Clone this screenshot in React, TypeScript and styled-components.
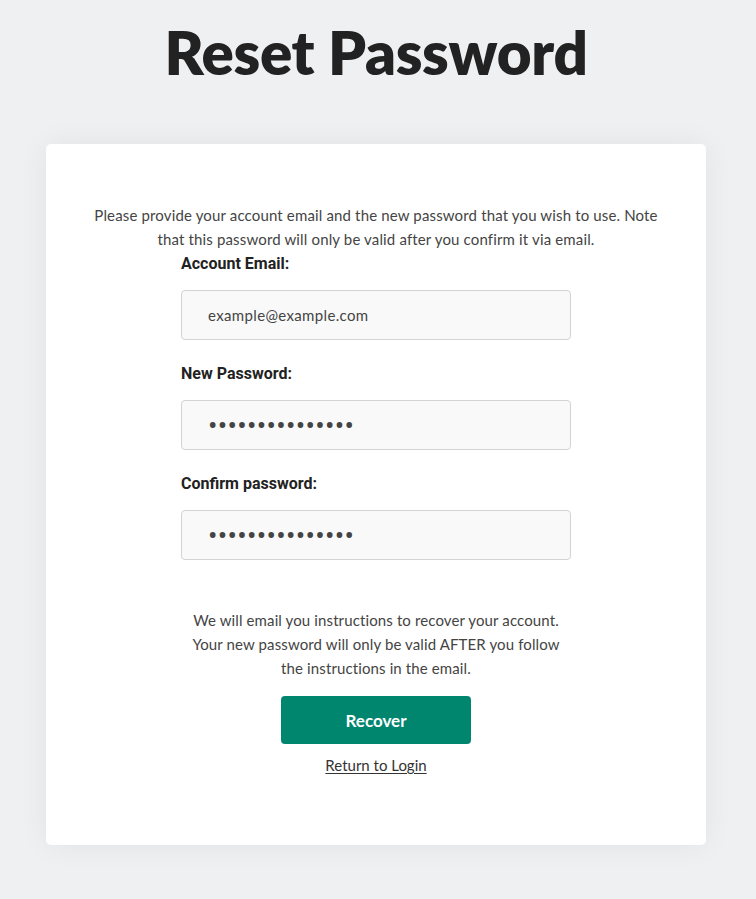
import React from "react";
import styled, { createGlobalStyle } from "styled-components";

const Global = createGlobalStyle`
  html, body { margin: 0; padding: 0; background: #eff0f2; }
  body { font-family: Lato, "Open Sans", sans-serif; color: #444; }
  * { box-sizing: border-box; }
`;

const Page = styled.div`
  width: 752px;
  display: flex;
  flex-direction: column;
  align-items: center;
  padding: 16px 0 55px;
`;

const Title = styled.h1`
  margin: 0;
  font-family: Lato, sans-serif;
  font-weight: 800;
  font-size: 60px;
  line-height: 72px;
  color: #222;
  letter-spacing: -0.3px;
`;

const Card = styled.div`
  margin-top: 56px;
  width: 660px;
  background: #fff;
  border-radius: 5px;
  box-shadow: 0 0 30px rgba(0, 0, 0, 0.06);
  padding: 59px 40px 68px;
  display: flex;
  flex-direction: column;
  align-items: center;
`;

const Intro = styled.p`
  margin: 0;
  font-size: 15px;
  line-height: 24px;
  letter-spacing: 0.15px;
  text-align: center;
  color: #444;
`;

const Form = styled.form`
  width: 390px;
  padding-top: 1px;
  display: flex;
  flex-direction: column;
`;

const Label = styled.label<{ $first?: boolean }>`
  font-family: Roboto, sans-serif;
  font-weight: 700;
  font-size: 16px;
  line-height: 24px;
  color: #222;
  margin-top: ${(p) => (p.$first ? "0" : "22px")};
  margin-bottom: 14px;
`;

const Input = styled.input<{ $secret?: boolean }>`
  width: 100%;
  height: 50px;
  border: 1px solid #d3d3d3;
  border-radius: 4px;
  background: #f9f9f9;
  padding: 0 26px;
  font-family: ${(p) => (p.$secret ? "Roboto, sans-serif" : "Lato, sans-serif")};
  font-size: ${(p) => (p.$secret ? "28px" : "15px")};
  letter-spacing: ${(p) => (p.$secret ? "0.3px" : "0.35px")};
  color: #444;
  outline: none;
`;

const Notice = styled.p`
  margin: 48px 0 0;
  width: 378px;
  font-size: 15px;
  line-height: 24px;
  letter-spacing: 0.12px;
  text-align: center;
  color: #444;
`;

const Button = styled.button`
  margin-top: 16px;
  width: 190px;
  height: 48px;
  border: none;
  border-radius: 4px;
  background: #00856f;
  color: #fff;
  font-family: Lato, sans-serif;
  font-weight: 700;
  font-size: 17px;
  cursor: pointer;
`;

const BackLink = styled.a`
  margin-top: 9px;
  font-size: 15px;
  line-height: 24px;
  color: #333;
  text-decoration: underline;
  text-underline-offset: 2px;
`;

export default function App() {
  return (
    <>
      <Global />
      <Page>
        <Title>Reset Password</Title>
        <Card>
          <Intro>
            Please provide your account email and the new password that you wish to use. Note
            <br />
            that this password will only be valid after you confirm it via email.
          </Intro>
          <Form onSubmit={(e) => e.preventDefault()}>
            <Label $first htmlFor="email">Account Email:</Label>
            <Input id="email" type="email" defaultValue="example@example.com" />
            <Label htmlFor="pw">New Password:</Label>
            <Input id="pw" type="password" $secret defaultValue="passwordpasswor" />
            <Label htmlFor="pw2">Confirm password:</Label>
            <Input id="pw2" type="password" $secret defaultValue="passwordpasswor" />
          </Form>
          <Notice>
            We will email you instructions to recover your account. Your new password will only be
            valid AFTER you follow the instructions in the email.
          </Notice>
          <Button type="button">Recover</Button>
          <BackLink href="#">Return to Login</BackLink>
        </Card>
      </Page>
    </>
  );
}
